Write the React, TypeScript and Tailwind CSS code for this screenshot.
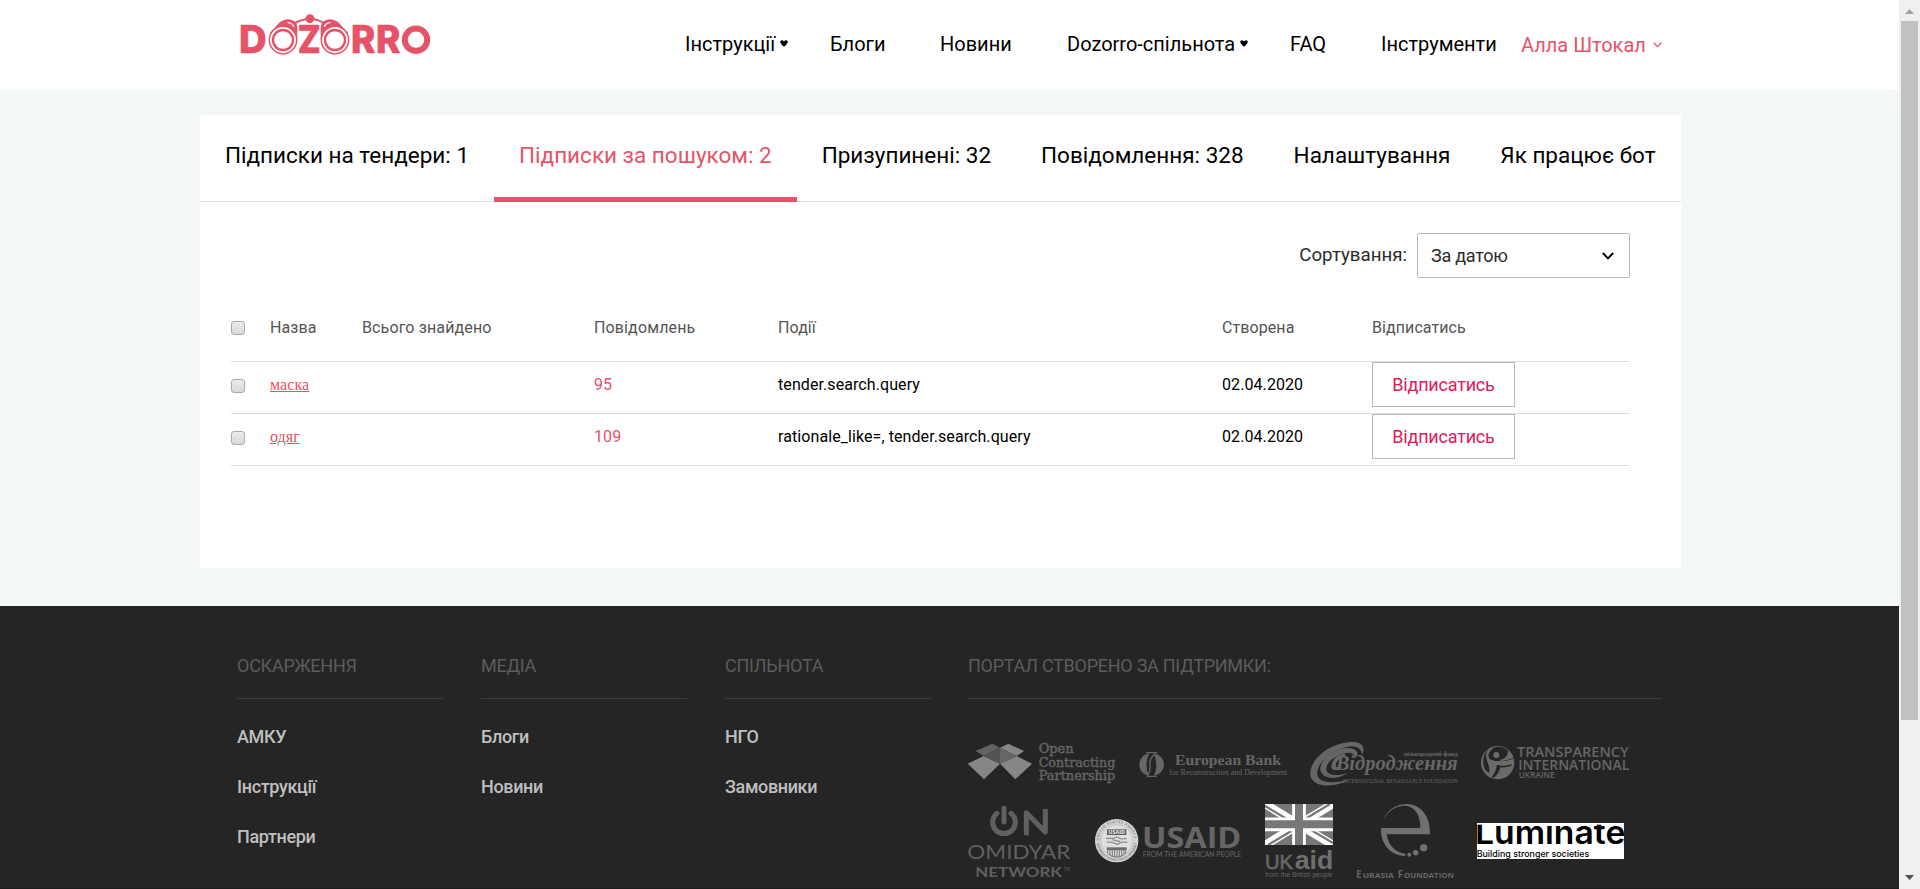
import React from "react";

type LabelProps = {
  x: number;
  y: number;
  size: number;
  width: number;
  fill?: string;
  font?: string;
  weight?: number;
  italic?: boolean;
  children: string;
};

function Label({ x, y, size, width, fill = "#666", font = "Open Sans", weight = 400, italic, children }: LabelProps) {
  return (
    <text
      x={x}
      y={y}
      fontSize={size}
      textLength={width}
      lengthAdjust="spacingAndGlyphs"
      fill={fill}
      fontFamily={`"${font}", sans-serif`}
      fontWeight={weight}
      fontStyle={italic ? "italic" : "normal"}
    >
      {children}
    </text>
  );
}

function DozorroLogo() {
  const c = "#e65267";
  return (
    <svg viewBox="120 36 576 132" className="h-[44px] w-[192px] overflow-visible">
      <g fill={c} stroke={c} strokeWidth="2">
        <Label x={117} y={160} size={113} width={83} fill={c} font="Inter" weight={800}>D</Label>
        <Label x={293} y={160} size={113} width={69} fill={c} font="Inter" weight={800}>Z</Label>
        <Label x={453} y={160} size={113} width={73} fill={c} font="Inter" weight={800}>R</Label>
        <Label x={528} y={160} size={113} width={73} fill={c} font="Inter" weight={800}>R</Label>
      </g>
      <circle cx="648" cy="119" r="33.5" fill="none" stroke={c} strokeWidth="18" />
      <g fill={c}>
        <path d="M210 98 L240 66 Q262 50 283 64 Q292 70 292 86 L292 118 L249 120 Z" />
        <path d="M444 98 L414 66 Q392 50 371 64 Q362 70 362 86 L362 118 L405 120 Z" />
        <circle cx="330" cy="56" r="13.5" />
      </g>
      <g fill="none" stroke={c} strokeWidth="6">
        <path d="M284 70 Q304 57 330 56 Q356 57 372 70" />
      </g>
      <g fill="none" stroke="#fff" strokeWidth="4" strokeLinecap="round">
        <path d="M264 68 Q276 69 281 79" />
        <path d="M390 68 Q378 69 373 79" />
      </g>
      {[249, 405].map((x) => (
        <g key={x} fill="none">
          <circle cx={x} cy="120" r="41" fill="#fff" stroke={c} strokeWidth="4.5" />
          <circle cx={x} cy="120" r="30" stroke={c} strokeWidth="7" />
        </g>
      ))}
    </svg>
  );
}

function NavCaret() {
  return (
    <svg viewBox="0 0 8 7" className="mb-[2px] h-[7px] w-[8px]">
      <path d="M0.3 1.2 Q2 -0.6 4 1.4 Q6 -0.6 7.7 1.2 Q8.4 3 4 6.8 Q-0.4 3 0.3 1.2Z" fill="#000" />
    </svg>
  );
}

const nav = [
  { label: "Інструкції", caret: true, w: "w-[145px]" },
  { label: "Блоги", caret: false, w: "w-[110px]" },
  { label: "Новини", caret: false, w: "w-[127px]" },
  { label: "Dozorro-спільнота", caret: true, w: "w-[223px]" },
  { label: "FAQ", caret: false, w: "w-[91px]" },
  { label: "Інструменти", caret: false, w: "w-[140px]" },
];

const tabs = [
  "Підписки на тендери: 1",
  "Підписки за пошуком: 2",
  "Призупинені: 32",
  "Повідомлення: 328",
  "Налаштування",
  "Як працює бот",
];

const rows = [
  { name: "маска", count: 95, events: "tender.search.query", date: "02.04.2020" },
  { name: "одяг", count: 109, events: "rationale_like=, tender.search.query", date: "02.04.2020" },
];

const columns = [
  { title: "ОСКАРЖЕННЯ", links: ["АМКУ", "Інструкції", "Партнери"] },
  { title: "МЕДІА", links: ["Блоги", "Новини"] },
  { title: "СПІЛЬНОТА", links: ["НГО", "Замовники"] },
];

const grid = "grid grid-cols-[39px_92px_232px_184px_444px_150px_257px]";

function Box() {
  return (
    <span className="block h-[14px] w-[14px] rounded-[3px] border border-[#a9a9a9] bg-linear-to-b from-[#ececec] to-[#d9d9d9]" />
  );
}

function OpenContracting() {
  return (
    <svg viewBox="54 54 444 150" className="h-[50px] w-[148px]">
      <path d="M53 131 L101 108 L150 131 L102 178Z M150 131 L200 108 L246 131 L196 178Z" fill="#868686" />
      <path d="M77 93 L127 71 L150 83 L101 108Z" fill="#626262" />
      <path d="M150 83 L175 71 L222 93 L200 108Z" fill="#868686" />
      <path d="M101 108 L150 83 L150 131Z" fill="#545454" />
      <path d="M150 83 L200 108 L150 131Z" fill="#666" />
      <g stroke="#666" strokeWidth="1.2">
        <Label x={266} y={99} size={36} width={105} font="DejaVu Serif">Open</Label>
        <Label x={266} y={140} size={36} width={230} font="DejaVu Serif">Contracting</Label>
        <Label x={266} y={180} size={36} width={230} font="DejaVu Serif">Partnership</Label>
      </g>
    </svg>
  );
}

function EuropeanBank() {
  return (
    <svg viewBox="567 54 444 150" className="h-[50px] w-[148px]">
      <g fill="#666">
        <path d="M598 101 C560 103 556 163 598 167 C586 150 588 118 598 101Z" />
        <path d="M611 101 C651 103 653 163 611 167 C622 150 621 118 611 101Z" />
      </g>
      <g fill="none" stroke="#666">
        <path d="M588 98 H622 M590 169 H620" strokeWidth="4" />
        <path d="M615 101 Q597 116 600 135 Q602 153 593 166" strokeWidth="4" />
      </g>
      <Label x={675} y={134} size={45} width={318} font="Liberation Serif" weight={700}>European Bank</Label>
      <Label x={658} y={166} size={23} width={353} font="Liberation Serif">for Reconstruction and Development</Label>
    </svg>
  );
}

function Vidrodzhennia() {
  return (
    <svg viewBox="60 54 444 150" className="h-[50px] w-[148px]">
      <g fill="#666">
        <path d="M180 178 C140 203 74 205 62 171 C52 120 122 65 190 66 C217 67 228 83 216 104 C214 82 195 75 172 80 C122 91 77 133 82 165 C88 190 132 192 180 178Z" />
        <path d="M174 158 C142 180 100 180 91 151 C88 120 133 83 176 84 C202 86 208 101 197 114 C192 99 178 94 160 101 C126 112 103 134 110 153 C117 168 145 168 174 158Z" />
        <path d="M158 142 C136 157 122 150 124 135 C129 116 144 104 164 101 L167 109 C148 114 138 124 137 137 C140 144 149 143 158 142Z" />
      </g>
      <Label x={137} y={151} size={66} width={366} font="Liberation Serif" weight={700} italic>Відродження</Label>
      <Label x={341} y={107} size={18} width={162} font="Liberation Serif" weight={700}>міжнародний фонд</Label>
      <Label x={159} y={188} size={16} width={344} font="Liberation Serif">INTERNATIONAL RENAISSANCE FOUNDATION</Label>
    </svg>
  );
}

function Transparency() {
  return (
    <svg viewBox="573 54 444 150" className="h-[50px] w-[148px]">
      <circle cx="623" cy="128" r="50" fill="#6b6b6b" />
      <g fill="#252525">
        <path d="M597 86 C575 104 577 137 587 151 L598 159 C600 145 594 133 590 118 C586 106 588 96 597 86Z" />
        <path d="M610 83 C591 100 592 112 604 121 C628 128 650 121 670 114 L668 129 C651 141 632 137 621 134 C619 148 612 163 605 170 L611 174 C624 164 629 151 631 142 C644 144 657 141 666 136 C662 129 644 127 627 120 C642 119 655 108 654 92 C641 78 622 78 610 83Z" />
      </g>
      <circle cx="619" cy="105" r="9" fill="#6b6b6b" />
      <path d="M596 116 Q625 132 671 116 L671 130 Q638 142 597 128Z" fill="#6b6b6b" />
      <Label x={681} y={111} size={43} width={335} weight={600}>TRANSPARENCY</Label>
      <Label x={685} y={150} size={43} width={333} weight={600}>INTERNATIONAL</Label>
      <Label x={686} y={175} size={24} width={108} weight={600}>UKRAINE</Label>
    </svg>
  );
}

function Omidyar() {
  return (
    <svg viewBox="54 240 309 240" className="h-[80px] w-[103px]">
      <g fill="none" stroke="#606060" strokeWidth="15">
        <path d="M141 280 A34 34 0 1 0 183 280" strokeLinecap="round" />
        <path d="M162 265 V306" strokeLinecap="round" />
        <path d="M229 346 V278 L286 336 V267" strokeLinejoin="round" />
      </g>
      <Label x={52} y={416} size={55} width={309} fill="#606060" font="Lato" weight={400}>OMIDYAR</Label>
      <Label x={76} y={470} size={40} width={260} fill="#606060" font="Lato" weight={700}>NETWORK</Label>
      <Label x={341} y={452} size={14} width={20} fill="#606060" font="Lato">TM</Label>
    </svg>
  );
}

function Usaid() {
  return (
    <svg viewBox="432 240 444 240" className="h-[80px] w-[148px]">
      <defs>
        <path id="seal-top" d="M447 362 a53 53 0 0 1 106 0" />
        <path id="seal-bottom" d="M439 362 a61 61 0 0 0 122 0" />
      </defs>
      <circle cx="500" cy="362" r="65" fill="#d4d4d4" />
      <circle cx="500" cy="362" r="48" fill="#dedede" stroke="#aaa" strokeWidth="1.5" />
      <g fontFamily='"Open Sans", sans-serif' fontSize="11" fontWeight="700" fill="#8a8a8a">
        <text><textPath href="#seal-top" textLength="160">UNITED STATES AGENCY</textPath></text>
        <text><textPath href="#seal-bottom" startOffset="6" textLength="178">INTERNATIONAL DEVELOPMENT</textPath></text>
      </g>
      <rect x="471" y="328" width="58" height="17" fill="#5c5c5c" />
      <Label x={475} y={342} size={15} width={50} fill="#eee" weight={700}>USAID</Label>
      <path d="M468 355 H488 L500 351 L514 357 L530 356 M470 366 L487 367 L503 373 L515 366 L532 367 M487 359 L510 365" fill="none" stroke="#888" strokeWidth="3.5" />
      <path d="M470 382 H530 V391 H470Z" fill="#6b6b6b" />
      <path d="M473 391 V400 Q482 410 500 412 Q518 410 527 400 V391" fill="none" stroke="#777" strokeWidth="3" />
      <path d="M480 391 V405 M487 391 V408 M494 391 V411 M501 391 V411 M508 391 V411 M515 391 V408 M522 391 V404" stroke="#777" strokeWidth="3" />
      <Label x={576} y={383} size={85} width={298} weight={700}>USAID</Label>
      <Label x={578} y={411} size={22} width={296} font="Lato">FROM THE AMERICAN PEOPLE</Label>
    </svg>
  );
}

function UkAid() {
  return (
    <svg viewBox="945 240 204 240" className="h-[80px] w-[68px]">
      <clipPath id="flag"><rect x="945" y="252" width="204" height="123" /></clipPath>
      <g clipPath="url(#flag)" fill="none">
        <rect x="945" y="252" width="204" height="123" fill="#777" />
        <path d="M945 252 L1149 375 M1149 252 L945 375" stroke="#fff" strokeWidth="25" />
        <path d="M945 258 L1047 319 M1149 369 L1047 308 M1140 252 L1047 308 M954 375 L1047 319" stroke="#777" strokeWidth="7" />
        <path d="M1047 252 V375 M945 313 H1149" stroke="#fff" strokeWidth="41" />
        <path d="M1047 252 V375 M945 313 H1149" stroke="#777" strokeWidth="24" />
      </g>
      <g stroke="#666" strokeWidth="2">
        <Label x={945} y={446} size={61} width={84} font="Liberation Sans">UK</Label>
      </g>
      <Label x={1034} y={446} size={76} width={116} fill="#6f6f6f" font="Liberation Sans" weight={700}>aid</Label>
      <Label x={946} y={472} size={19} width={202} font="Liberation Sans">from the British people</Label>
    </svg>
  );
}

function Eurasia() {
  return (
    <svg viewBox="198 240 294 240" className="h-[80px] w-[98px]">
      <g fill="#707070">
        <path d="M279 299 C293 265 326 252 350 252 C389 253 422 284 420 343 L290 343 C294 375 315 397 347 402 L345 408 C303 407 271 373 273 324 L391 324 C391 284 376 261 347 257 C317 256 294 273 279 299Z" />
        <circle cx="358" cy="404" r="6" />
        <circle cx="377" cy="398" r="8" />
        <circle cx="401" cy="383" r="11" />
      </g>
      <Label x={199} y={474} size={29} width={16} weight={700}>E</Label>
      <Label x={218} y={474} size={22} width={94} weight={700}>URASIA</Label>
      <Label x={323} y={474} size={29} width={16} weight={700}>F</Label>
      <Label x={342} y={474} size={22} width={150} weight={700}>OUNDATION</Label>
    </svg>
  );
}

function Luminate() {
  return (
    <svg viewBox="561 240 441 240" className="h-[80px] w-[147px]">
      <clipPath id="lum"><rect x="561" y="309" width="441" height="108" /></clipPath>
      <g clipPath="url(#lum)">
        <rect x="561" y="309" width="441" height="108" fill="#fff" />
        <Label x={555} y={372} size={98} width={451} fill="#000" font="Inter" weight={600}>Luminate</Label>
        <rect x="561" y="309" width="441" height="5" fill="#fff" />
        <Label x={560} y={411} size={26} width={338} fill="#000" font="Inter" weight={500}>Building stronger societies</Label>
      </g>
    </svg>
  );
}

export default function App() {
  return (
    <div className="flex h-[889px] w-[1920px] overflow-hidden bg-[#f3f7f8] font-['Roboto',sans-serif] text-black">
      <div className="flex w-[1899px] shrink-0 flex-col">
        <header className="flex h-[90px] shrink-0 bg-white pl-[240px]">
          <div className="w-[445px] pt-[12px]">
            <DozorroLogo />
          </div>
          <nav className="flex h-[88px] items-center whitespace-nowrap text-[20px]">
            {nav.map((n) => (
              <a key={n.label} className={`flex items-center gap-[5px] ${n.w}`}>
                {n.label}
                {n.caret && <NavCaret />}
              </a>
            ))}
            <a className="flex items-center gap-[7px] pt-[2px] text-[#e65267]">
              Алла Штокал
              <svg viewBox="0 0 9 6" className="h-[6px] w-[9px]">
                <path d="M0.7 0.7 L4.5 4.6 L8.3 0.7" fill="none" stroke="#e65267" strokeWidth="1.3" />
              </svg>
            </a>
          </nav>
        </header>

        <main className="mt-[25px] ml-[200px] h-[453px] w-[1481px] shrink-0 bg-white">
          <div className="flex h-[87px] border-b border-[#dcdcdc] text-[22.5px] leading-[34px] whitespace-nowrap">
            {tabs.map((t, i) => (
              <a
                key={t}
                className={
                  i === 1
                    ? "h-[87px] border-b-[5px] border-[#e65267] px-[25px] pt-[23px] text-[#e65267]"
                    : "h-[86px] px-[25px] pt-[23px]"
                }
              >
                {t}
              </a>
            ))}
          </div>

          <div className="mt-[31px] mr-[51px] flex items-center justify-end text-[18px] text-[#2b2b2b]">
            <span className="mr-[10px] text-[18.7px]">Сортування:</span>
            <div className="flex h-[45px] w-[213px] items-center justify-between rounded-[2px] border border-[#b9b9b9] pr-[15px] pl-[13px] tracking-[-0.25px]">
              За датою
              <svg viewBox="0 0 12 8" className="h-[8px] w-[12px]">
                <path d="M0.8 1 L6 6.3 L11.2 1" fill="none" stroke="#000" strokeWidth="1.9" />
              </svg>
            </div>
          </div>

          <div className="ml-[31px] w-[1398px] text-[16px] tracking-[0.08px]">
            <div className={`${grid} h-[84px] items-center border-b border-[#dcdcdc] pt-[16px] text-[#555]`}>
              <Box />
              <span>Назва</span>
              <span className="tracking-[0.13px]">Всього знайдено</span>
              <span className="tracking-[0.13px]">Повідомлень</span>
              <span>Події</span>
              <span>Створена</span>
              <span>Відписатись</span>
            </div>
            {rows.map((r) => (
              <div key={r.name} className={`${grid} h-[52px] border-b border-[#dcdcdc]`}>
                <span className="pt-[17px]"><Box /></span>
                <a className="pt-[12px] font-['Liberation_Serif',serif] leading-[22px] text-[#e65267] underline">{r.name}</a>
                <span />
                <span className="pt-[11px] text-[#e65267]">{r.count}</span>
                <span className="pt-[11px]">{r.events}</span>
                <span className="pt-[11px]">{r.date}</span>
                <button className="h-[45px] w-[143px] border border-[#b9b9b9] text-[18px] tracking-[-0.2px] text-[#e0195a]">Відписатись</button>
              </div>
            ))}
          </div>
        </main>

        <footer className="mt-[38px] flex h-[283px] shrink-0 border-b border-[#1e1b1e] bg-[#252525] pt-[46px] pl-[237px] text-[18px]">
          {columns.map((c) => (
            <section key={c.title} className="w-[244px]">
              <h3 className="h-[47px] w-[206px] border-b border-[#3c3c3c] tracking-[-0.25px] text-[#5c5c5c]">{c.title}</h3>
              <ul className="pt-[24px]">
                {c.links.map((l) => (
                  <li key={l} className="h-[50px] font-medium tracking-[-0.36px] text-[#bfbfbf]">{l}</li>
                ))}
              </ul>
            </section>
          ))}
          <section className="-ml-px w-[694px]">
            <h3 className="h-[47px] border-b border-[#3c3c3c] tracking-[-0.26px] text-[#5c5c5c]">ПОРТАЛ СТВОРЕНО ЗА ПІДТРИМКИ:</h3>
            <div className="mt-[39px] flex gap-[23px]">
              <OpenContracting />
              <EuropeanBank />
              <Vidrodzhennia />
              <Transparency />
            </div>
            <div className="mt-[12px] flex gap-[23px]">
              <Omidyar />
              <Usaid />
              <UkAid />
              <Eurasia />
              <Luminate />
            </div>
          </section>
        </footer>
      </div>

      <div className="flex h-[889px] w-[21px] shrink-0 flex-col items-center bg-[#f0f0f0]">
        <svg viewBox="0 0 9 5" className="mt-[9px] h-[5px] w-[9px]"><path d="M0 5 L4.5 0 L9 5Z" fill="#a3a3a3" /></svg>
        <div className="mt-[7px] h-[699px] w-[17px] bg-[#c1c1c1]" />
        <svg viewBox="0 0 9 5" className="mt-[155px] h-[5px] w-[9px]"><path d="M0 0 L4.5 5 L9 0Z" fill="#505050" /></svg>
      </div>
    </div>
  );
}
